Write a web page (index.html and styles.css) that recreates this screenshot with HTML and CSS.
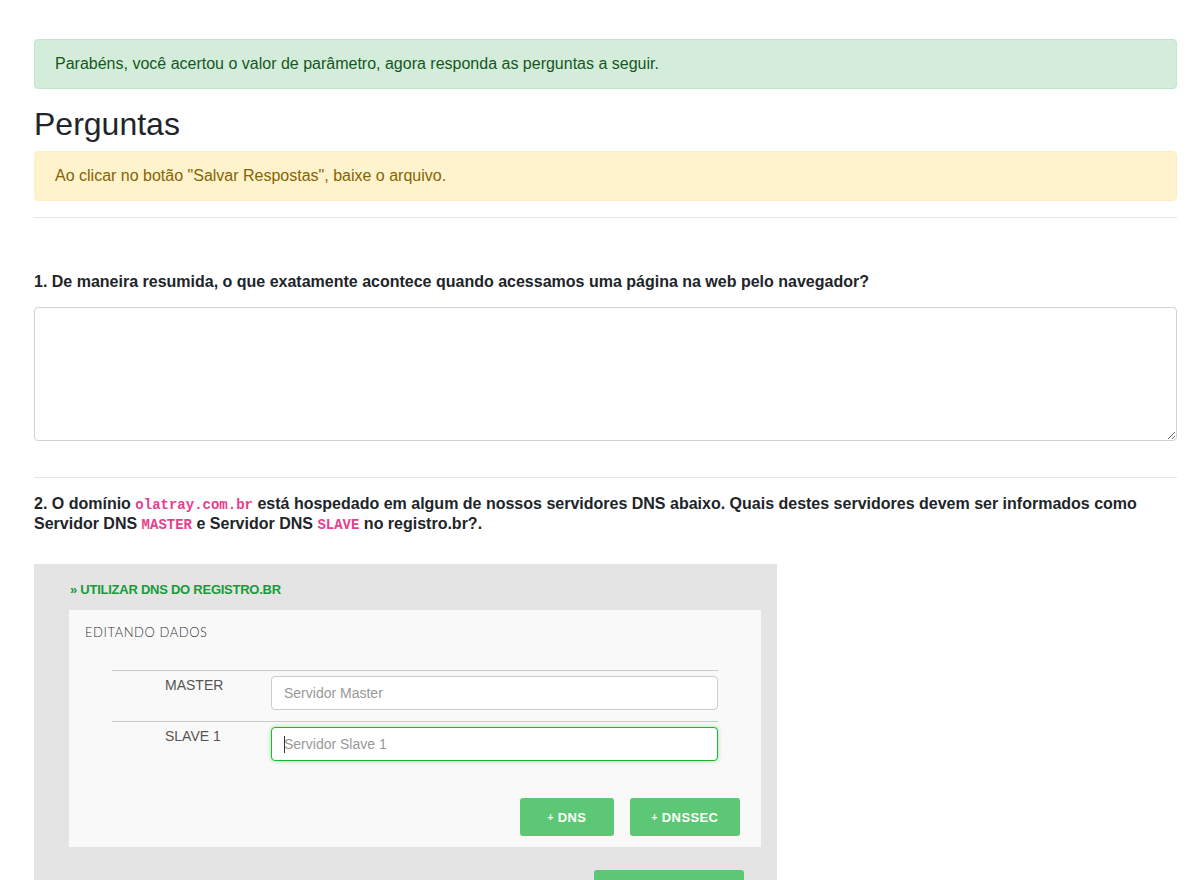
FILE: index.html
```
<!DOCTYPE html>
<html lang="pt-BR">
<head>
<meta charset="utf-8">
<title>Perguntas</title>
<link rel="stylesheet" href="styles.css">
</head>
<body>
<div class="container">
  <div class="alert alert-success">Parabéns, você acertou o valor de parâmetro, agora responda as perguntas a seguir.</div>
  <h2 class="title">Perguntas</h2>
  <div class="alert alert-warning">Ao clicar no botão "Salvar Respostas", baixe o arquivo.</div>
  <hr class="sep">

  <div class="question q1">
    <label class="q-label">1. De maneira resumida, o que exatamente acontece quando acessamos uma página na web pelo navegador?</label>
    <textarea class="answer"></textarea>
  </div>

  <hr class="sep">

  <div class="question q2">
    <label class="q-label">2. O domínio <code>olatray.com.br</code> está hospedado em algum de nossos servidores DNS abaixo. Quais destes servidores devem ser informados como Servidor DNS <code>MASTER</code> e Servidor DNS <code>SLAVE</code> no registro.br?.</label>
  </div>

  <div class="shot">
    <div class="shot-link">» UTILIZAR DNS DO REGISTRO.BR</div>
    <div class="shot-panel">
      <div class="shot-head">EDITANDO DADOS</div>
      <div class="dns-table">
        <div class="dns-row">
          <div class="dns-label">MASTER</div>
          <div class="dns-field"><div class="fake-input">Servidor Master</div></div>
        </div>
        <div class="dns-row">
          <div class="dns-label">SLAVE 1</div>
          <div class="dns-field"><div class="fake-input focus"><span class="caret"></span>Servidor Slave 1</div></div>
        </div>
      </div>
      <div class="shot-actions">
        <span class="gbtn btn-dns"><span class="plus">+</span>DNS</span>
        <span class="gbtn btn-dnssec"><span class="plus">+</span>DNSSEC</span>
      </div>
    </div>
    <div class="shot-bottom">
      <span class="gbtn btn-save"></span>
    </div>
  </div>
</div>
</body>
</html>
```
FILE: styles.css
```
html, body {
  margin: 0;
  padding: 0;
  background: #fff;
}
body {
  font-family: "Liberation Sans", Arial, sans-serif;
  font-size: 16px;
  line-height: 1.5;
  color: #212529;
  overflow: hidden;
}
.container {
  padding: 39px 22px 0 34px;
}
.alert {
  padding: 12px 20px;
  border: 1px solid transparent;
  border-radius: 4px;
  margin-bottom: 16px;
}
.alert-success {
  background: #d4edda;
  border-color: #c3e6cb;
  color: #155724;
}
.alert-warning {
  background: #fff3cd;
  border-color: #ffeeba;
  color: #856404;
}
.title {
  margin: 0 0 8px 0;
  font-size: 32px;
  font-weight: 500;
  line-height: 1.2;
}
.sep {
  margin: 0;
  border: 0;
  border-top: 1px solid rgba(0,0,0,.1);
  height: 0;
}
.q1 {
  padding-top: 54px;
  padding-bottom: 36px;
}
.q-label {
  display: block;
  font-weight: 700;
  font-size: 16px;
  line-height: 20px;
}
.q1 .q-label {
  margin-bottom: 15px;
}
.answer {
  display: block;
  box-sizing: border-box;
  width: 100%;
  height: 134px;
  border: 1px solid #ced4da;
  border-radius: 4px;
  background: #fff;
  margin: 0;
  padding: 6px 12px;
  font: inherit;
  resize: vertical;
}
.q2 {
  padding-top: 16px;
}
code {
  font-family: "Liberation Mono", "DejaVu Sans Mono", monospace;
  font-size: 87.5%;
  line-height: 1;
  color: #e83e8c;
  font-weight: 700;
}
.shot {
  margin-top: 30px;
  width: 743px;
  height: 330px;
  background: #e4e4e4;
  box-sizing: border-box;
  padding: 18px 16px 0 35px;
}
.shot-link {
  font-family: "Liberation Sans", Arial, sans-serif;
  font-weight: 700;
  font-size: 13px;
  line-height: 16px;
  color: #169b38;
  padding-left: 1px;
  margin-bottom: 12px;
  letter-spacing: -0.25px;
}
.shot-panel {
  background: #f9f9f9;
  padding: 14px 21px 11px 16px;
  height: 237px;
  box-sizing: border-box;
}
.shot-head {
  font-family: "Lato", "Open Sans", sans-serif;
  font-weight: 300;
  font-size: 13px;
  line-height: 16px;
  color: #333;
  letter-spacing: 0.55px;
}
.dns-table {
  margin: 30px 22px 0 27px;
}
.dns-row {
  display: flex;
  border-top: 1px solid #c8c8c8;
  padding: 5px 0 11px;
}
.dns-row:last-child {
  padding-bottom: 0;
}
.dns-label {
  width: 159px;
  box-sizing: border-box;
  padding-left: 53px;
  font-family: "Liberation Sans", Arial, sans-serif;
  font-size: 14px;
  line-height: 18px;
  color: #555;
}
.dns-field {
  flex: 1;
}
.fake-input {
  box-sizing: border-box;
  height: 34px;
  border: 1px solid #ccc;
  border-radius: 4px;
  background: #fff;
  padding: 0 12px;
  font-family: "Liberation Sans", Arial, sans-serif;
  font-size: 14px;
  line-height: 32px;
  color: #999;
}
.fake-input.focus {
  border-color: #1cb92c;
  box-shadow: 0 0 4px rgba(40, 200, 60, .45);
}
.caret {
  display: inline-block;
  width: 1px;
  height: 17px;
  background: #333;
  vertical-align: -4px;
  margin-right: -1px;
}
.shot-actions {
  display: flex;
  justify-content: flex-end;
  gap: 16px;
  margin-top: 37px;
}
.gbtn {
  display: inline-flex;
  align-items: center;
  justify-content: center;
  box-sizing: border-box;
  height: 38px;
  background: #5cc775;
  border-radius: 3px;
  color: #fff;
  font-family: "Liberation Sans", Arial, sans-serif;
  font-weight: 700;
  font-size: 13px;
  letter-spacing: 0.4px;
}
.plus {
  font-size: 10px;
  margin-right: 4px;
}
.btn-dns {
  width: 94px;
}
.btn-dnssec {
  width: 110px;
}
.shot-bottom {
  display: flex;
  padding: 23px 0 0 525px;
}
.btn-save {
  width: 150px;
}
```
